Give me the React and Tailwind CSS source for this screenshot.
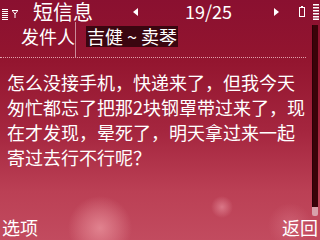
import React from "react";

const font = { fontFamily: '"Noto Sans CJK SC", "Noto Sans", sans-serif' };

function SignalIcon() {
  return (
    <svg width="30" height="22" viewBox="0 0 30 22" className="shrink-0">
      <g fill="#ffffff">
        <rect x="2" y="8" width="6" height="1" />
        <rect x="2" y="10" width="6" height="1" />
        <rect x="2" y="12" width="6" height="1" />
        <rect x="2" y="14" width="6" height="1" />
        <rect x="2" y="16" width="6" height="1" />
        <rect x="2" y="18" width="6" height="1" />
      </g>
      <g stroke="#ffffff" strokeWidth="1" fill="none">
        <path d="M12 9.5 H18" />
        <path d="M12.5 10 L15 13 L17.5 10" />
        <path d="M15 12 V17" />
      </g>
    </svg>
  );
}

function Arrow({ dir }) {
  return (
    <svg width="5" height="8" viewBox="0 0 5 8" className="shrink-0">
      {dir === "left" ? (
        <polygon points="5,0 5,8 0,4" fill="#ffffff" />
      ) : (
        <polygon points="0,0 0,8 5,4" fill="#ffffff" />
      )}
    </svg>
  );
}

function BatteryIcon() {
  return (
    <svg width="6" height="11" viewBox="0 0 6 11" className="shrink-0">
      <rect x="2" y="0" width="2" height="1.5" fill="#ffffff" />
      <rect x="0.5" y="1.5" width="5" height="9" fill="none" stroke="#ffffff" strokeWidth="1" />
    </svg>
  );
}

function BatteryBars() {
  return (
    <svg width="6" height="16" viewBox="0 0 6 16" className="shrink-0">
      <g fill="#ffffff">
        <rect x="0" y="0" width="6" height="1.5" />
        <rect x="0" y="3" width="6" height="1.5" />
        <rect x="0" y="6" width="6" height="1.5" />
        <rect x="0" y="9" width="6" height="1.5" />
        <rect x="0" y="12" width="6" height="1.5" />
        <rect x="0" y="14.5" width="6" height="1.5" />
      </g>
    </svg>
  );
}

export default function App() {
  return (
    <div
      style={font}
      className="w-[320px] h-[240px] overflow-hidden flex flex-col text-white bg-[radial-gradient(circle_at_100px_228px,rgba(236,150,160,0.75)_0,rgba(236,150,160,0.35)_18px,transparent_32px),radial-gradient(circle_at_222px_207px,rgba(230,140,155,0.7)_0,transparent_11px),radial-gradient(circle_at_290px_225px,rgba(230,140,155,0.35)_0,transparent_22px),linear-gradient(180deg,#8a1030_0%,#93152f_25%,#a5263f_55%,#bb4055_80%,#c24b5f_100%)]"
    >
      {/* status bar */}
      <div className="h-[22px] pt-[1px] flex items-center shrink-0">
        <SignalIcon />
        <span className="ml-[3px] w-[100px] text-[20px] leading-[21px]">短信息</span>
        <Arrow dir="left" />
        <span className="ml-[47px] w-[89px] text-[18px] leading-[21px]">19/25</span>
        <Arrow dir="right" />
        <span className="ml-[20px] flex items-center">
          <BatteryIcon />
        </span>
        <span className="ml-[8px] flex items-center">
          <BatteryBars />
        </span>
      </div>

      {/* content */}
      <div className="flex flex-1 min-h-0">
        <div className="w-[311px] flex flex-col">
          <div className="h-[36px] mr-[5px] flex border-b border-dotted border-[#e0a0ac]">
            <div className="w-[76px] pl-[21px] pt-[2px] text-[18px] leading-[24px] border-r border-[#c98a98]">
              发件人
            </div>
            <div className="pl-[10px] pt-[3px]">
              <span className="inline-flex items-center bg-[#3a0610] px-[1px] text-[18px] leading-[21px]">
                <span>吉健</span>
                <span className="mx-[4px]">~</span>
                <span>卖琴</span>
              </span>
            </div>
          </div>
          <p className="pl-[7px] pt-[12px] text-[18px] leading-[25px]">
            怎么没接手机，快递来了，但我今天匆忙都忘了把那2块钢罩带过来了，现在才发现，晕死了，明天拿过来一起寄过去行不行呢？
          </p>
        </div>
        <div className="ml-[1px] mt-[3px] mb-[2px] w-[6px] flex flex-col">
          <div className="flex-1 bg-[#3a0309] border-l border-[#2a0005]" />
          <div className="h-[9px] bg-[#d8a0aa] rounded-b-[2px]" />
        </div>
      </div>

      {/* softkeys */}
      <div className="h-[22px] flex items-start justify-between shrink-0 px-[2px] text-[18px]">
        <span className="leading-[19px]">选项</span>
        <span className="leading-[19px]">返回</span>
      </div>
    </div>
  );
}
